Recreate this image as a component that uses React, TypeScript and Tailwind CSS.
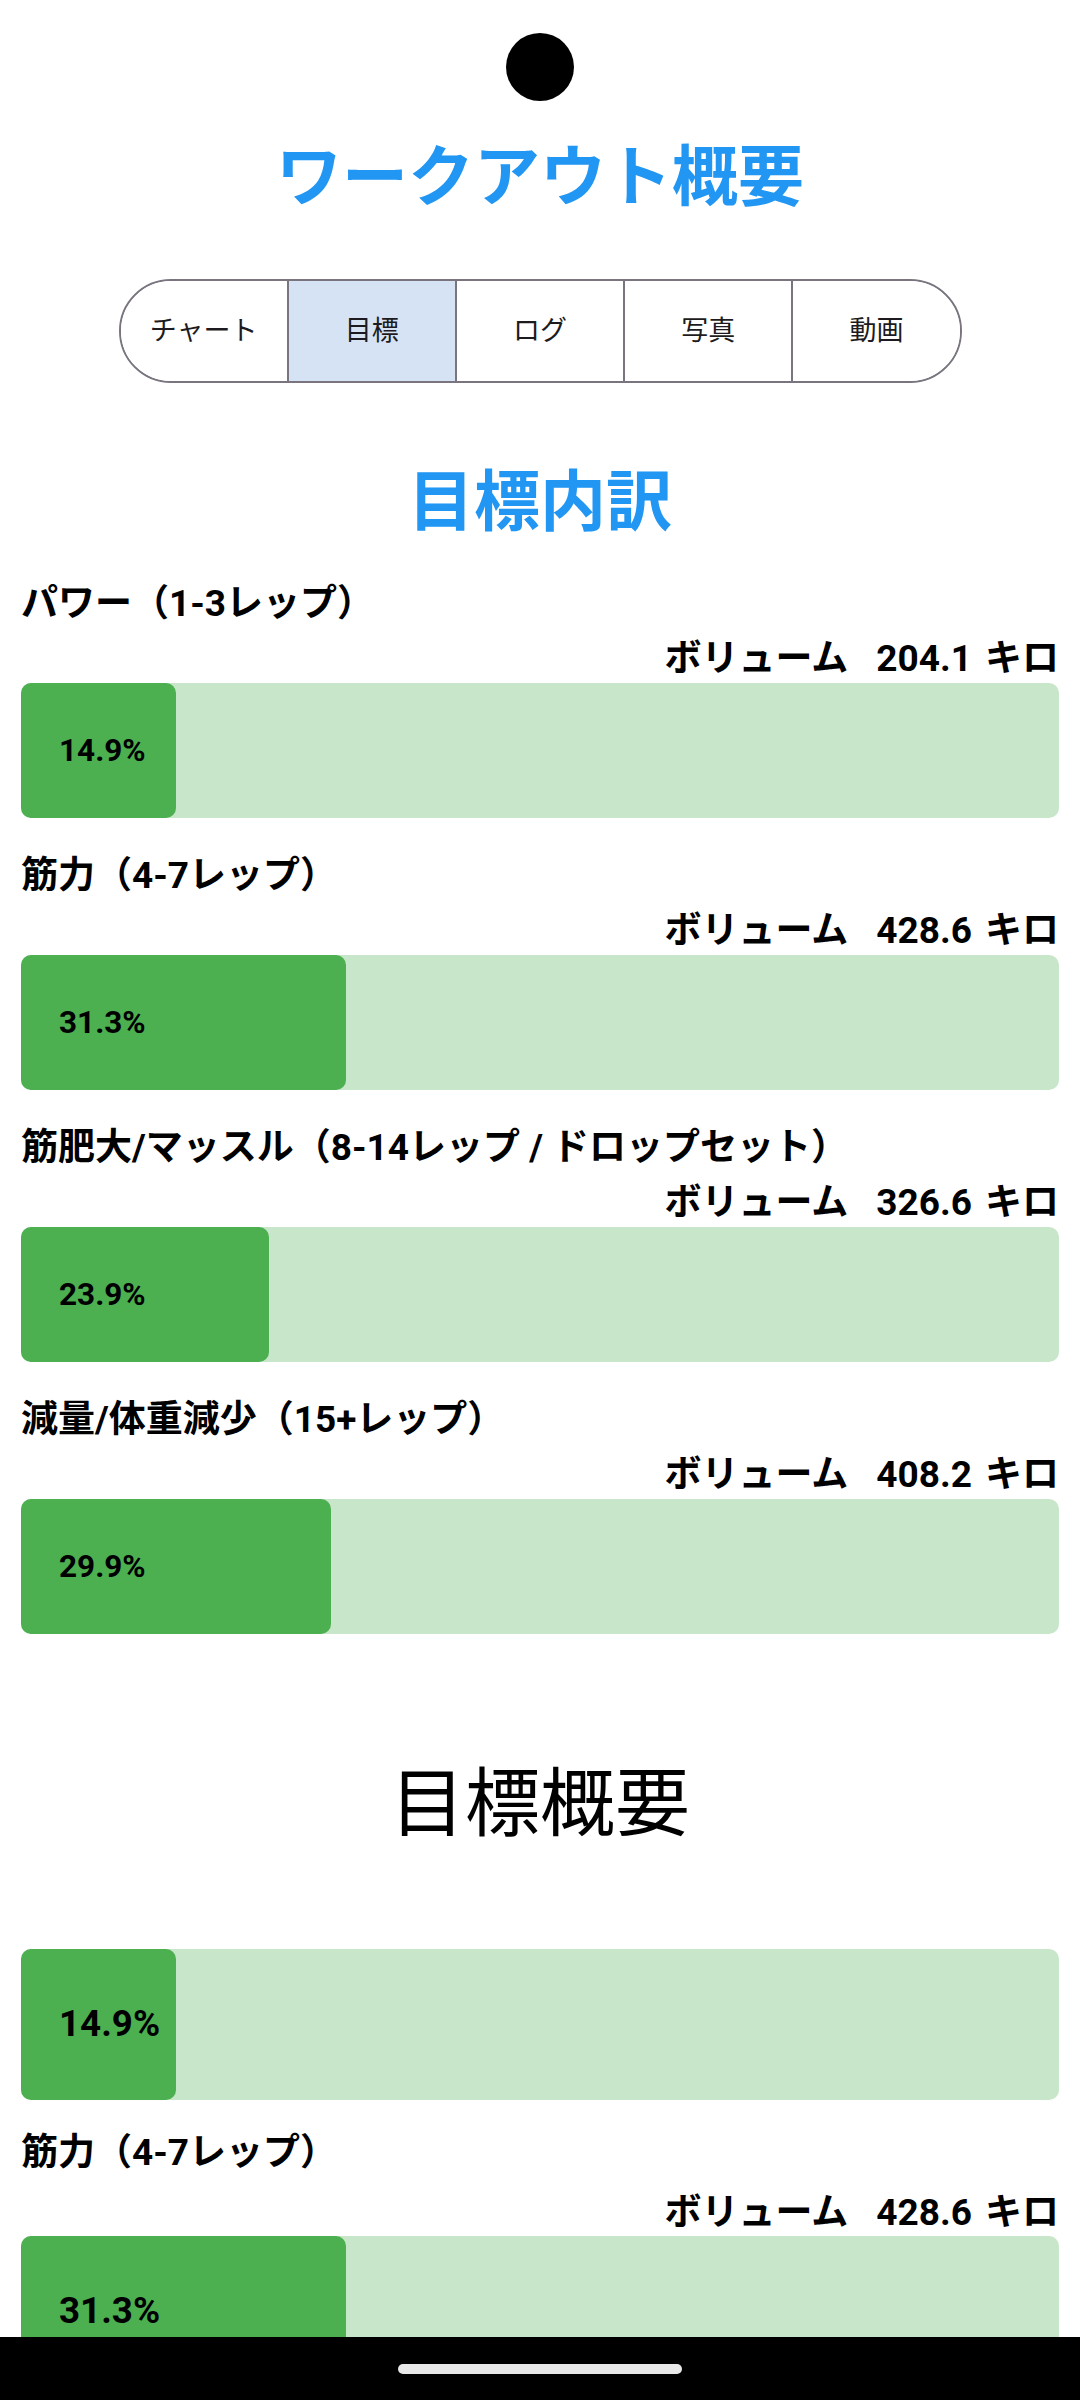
import React from "react";

const goals = [
  { label: "パワー（1-3レップ）", volume: "204.1", pct: 14.9 },
  { label: "筋力（4-7レップ）", volume: "428.6", pct: 31.3 },
  { label: "筋肥大/マッスル（8-14レップ / ドロップセット）", volume: "326.6", pct: 23.9 },
  { label: "減量/体重減少（15+レップ）", volume: "408.2", pct: 29.9 },
];

const tabs = ["チャート", "目標", "ログ", "写真", "動画"];

function Bar({ pct, big }: { pct: number; big?: boolean }) {
  return (
    <div className={`w-full rounded-[10px] bg-[#C8E6C9] ${big ? "h-[151px]" : "h-[135px]"}`}>
      <div
        className="h-full rounded-[10px] bg-[#4CAF50] flex items-center"
        style={{ width: `${pct}%` }}
      >
        <span
          className={`pl-[38px] whitespace-nowrap font-bold text-black leading-none ${
            big ? "text-[36.75px]" : "text-[31.5px]"
          }`}
        >
          {pct}%
        </span>
      </div>
    </div>
  );
}

function Volume({ value, className }: { value: string; className?: string }) {
  return (
    <div className={`text-right text-[37px] font-bold leading-none text-black ${className ?? ""}`}>
      ボリューム<span className="ml-[28px]">{value}</span>
      <span className="ml-[13px]">キロ</span>
    </div>
  );
}

export default function App() {
  return (
    <div className="relative w-[1080px] h-[2400px] overflow-hidden bg-white font-[Roboto,'Noto_Sans_CJK_JP',sans-serif]">
      <div className="mx-auto mt-[33px] w-[68px] h-[68px] rounded-full bg-black" />

      <h1 className="mt-[44px] text-center text-[66px] font-bold leading-none text-[#2196F3]">
        ワークアウト概要
      </h1>

      <div className="mx-auto mt-[68px] flex h-[104px] w-[843px] overflow-hidden rounded-full border-2 border-[#79747E]">
        {tabs.map((t, i) => (
          <div
            key={t}
            className={`flex flex-1 items-center justify-center text-[27px] text-[#1d1b20] ${
              i > 0 ? "border-l-2 border-[#79747E]" : ""
            } ${i === 1 ? "bg-[#D5E3F5]" : "bg-white"}`}
          >
            {t}
          </div>
        ))}
      </div>

      <h2 className="mt-[87px] text-center text-[66px] font-bold leading-none text-[#2196F3]">
        目標内訳
      </h2>

      <div className="px-[21px]">
        {goals.map((g, i) => (
          <div key={g.label} className={i === 0 ? "mt-[49px]" : "mt-[39px]"}>
            <div className="text-[37px] font-bold leading-none text-black">{g.label}</div>
            <Volume value={g.volume} className="mt-[18px]" />
            <div className="mt-[6px]">
              <Bar pct={g.pct} />
            </div>
          </div>
        ))}
      </div>

      <h2 className="mt-[133px] text-center text-[75px] font-normal leading-none text-black">
        目標概要
      </h2>

      <div className="px-[21px]">
        <div className="mt-[107px]">
          <Bar pct={goals[0].pct} big />
        </div>
        <div className="mt-[34px] text-[37px] font-bold leading-none text-black">{goals[1].label}</div>
        <Volume value={goals[1].volume} className="mt-[23px]" />
        <div className="mt-[5px]">
          <Bar pct={goals[1].pct} big />
        </div>
      </div>

      <div className="absolute bottom-0 left-0 right-0 flex h-[63px] items-center justify-center bg-black">
        <div className="h-[10px] w-[284px] rounded-full bg-[#E8E8E8]" />
      </div>
    </div>
  );
}
